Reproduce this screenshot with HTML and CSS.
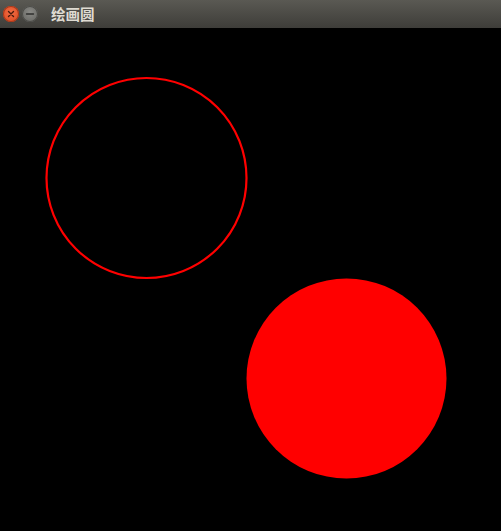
FILE: index.html
```html
<!DOCTYPE html>
<html>
<head>
<meta charset="utf-8">
<link rel="stylesheet" href="styles.css">
</head>
<body>
<div class="window">
  <div class="titlebar">
    <div class="buttons">
      <span class="btn close">
        <svg width="8" height="8" viewBox="0 0 8 8"><path d="M1.5 1.5L6.5 6.5M6.5 1.5L1.5 6.5" stroke="#4a1a0c" stroke-width="1.4" stroke-linecap="round"/></svg>
      </span>
      <span class="btn minimize">
        <svg width="10" height="8" viewBox="0 0 10 8"><path d="M1.5 4H8.5" stroke="#2e2e2c" stroke-width="1.4" stroke-linecap="round"/></svg>
      </span>
    </div>
    <span class="title">绘画圆</span>
  </div>
  <svg class="canvas" width="501" height="503" viewBox="0 0 501 503">
    <circle cx="146.5" cy="150" r="100" fill="none" stroke="#ff0000" stroke-width="2.2"/>
    <circle cx="346.5" cy="350.5" r="100" fill="#ff0000"/>
  </svg>
</div>
</body>
</html>
```
FILE: styles.css
```css
html, body {
  margin: 0;
  padding: 0;
  background: #000;
  overflow: hidden;
}
.window {
  width: 501px;
  height: 531px;
  display: flex;
  flex-direction: column;
  background: #000;
}
.titlebar {
  height: 28px;
  flex: none;
  display: flex;
  align-items: center;
  background: linear-gradient(#5a5953, #3e3d39);
  padding-left: 3px;
  gap: 12px;
}
.buttons {
  display: flex;
  gap: 3px;
}
.btn {
  width: 16px;
  height: 16px;
  border-radius: 50%;
  display: flex;
  align-items: center;
  justify-content: center;
}
.close {
  background: radial-gradient(circle at 50% 40%, #f26d45, #d9461c);
  box-shadow: inset 0 0 0 1px #a8381a;
}
.minimize {
  background: radial-gradient(circle at 50% 40%, #8a8a86, #62625e);
  box-shadow: inset 0 0 0 1px #4c4c48;
}
.title {
  font-family: "Noto Sans CJK SC", "Noto Sans", sans-serif;
  font-weight: bold;
  font-size: 14.5px;
  color: #dfdbd2;
  line-height: 1;
  margin-left: 1px;
}
.canvas {
  display: block;
  flex: none;
}
```
